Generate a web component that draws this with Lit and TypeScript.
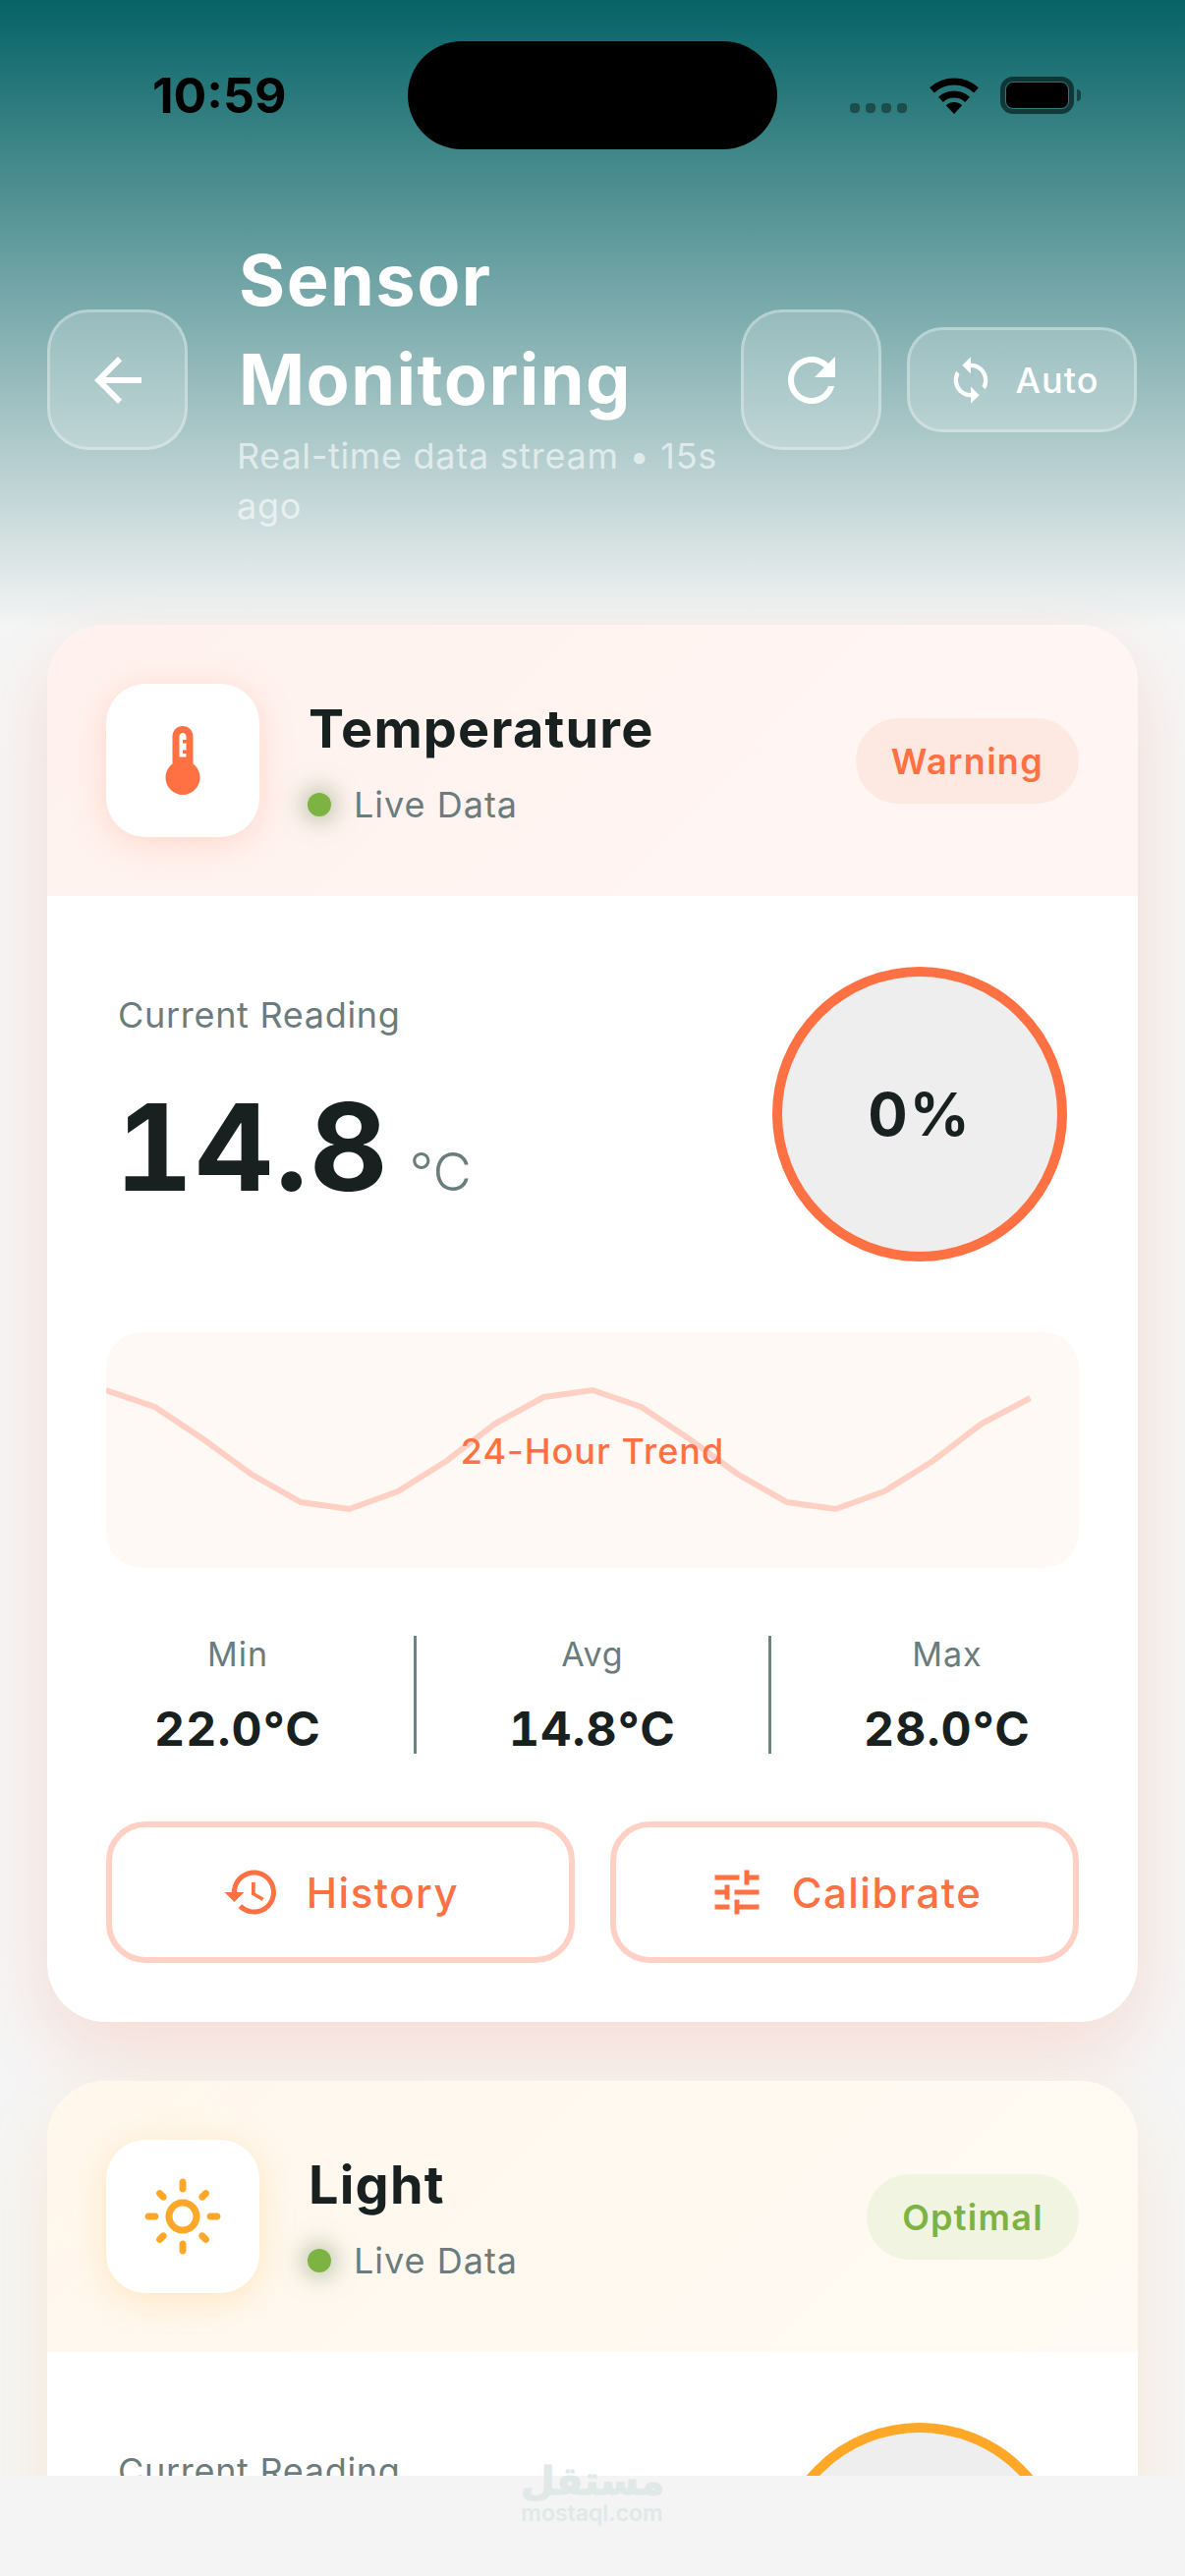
import { LitElement, html, css, svg } from 'lit';
import { customElement } from 'lit/decorators.js';

const ICONS: Record<string, string> = {
  back: 'M20 11H7.83l5.59-5.59L12 4l-8 8 8 8 1.41-1.41L7.83 13H20v-2z',
  refresh: 'M17.65 6.35C16.2 4.9 14.21 4 12 4c-4.42 0-7.99 3.58-7.99 8s3.57 8 7.99 8c3.73 0 6.84-2.55 7.73-6h-2.08c-.82 2.33-3.04 4-5.65 4-3.31 0-6-2.69-6-6s2.69-6 6-6c1.66 0 3.14.69 4.22 1.78L13 11h7V4l-2.35 2.35z',
  sync: 'M12 4V1L8 5l4 4V6c3.31 0 6 2.69 6 6 0 1.01-.25 1.97-.7 2.8l1.46 1.46C19.54 15.03 20 13.57 20 12c0-4.42-3.58-8-8-8zm0 14c-3.31 0-6-2.69-6-6 0-1.01.25-1.97.7-2.8L5.24 7.74C4.46 8.97 4 10.43 4 12c0 4.42 3.58 8 8 8v3l4-4-4-4v3z',
  history: 'M13 3c-4.97 0-9 4.03-9 9H1l3.89 3.89.07.14L9 12H6c0-3.87 3.13-7 7-7s7 3.13 7 7-3.13 7-7 7c-1.93 0-3.68-.79-4.94-2.06l-1.42 1.42C8.27 19.99 10.51 21 13 21c4.97 0 9-4.03 9-9s-4.03-9-9-9zm-1 5v5l4.28 2.54.72-1.21-3.5-2.08V8H12z',
  tune: 'M3 17v2h6v-2H3zM3 5v2h10V5H3zm10 16v-2h8v-2h-8v-2h-2v6h2zM7 9v2H3v2h4v2h2V9H7zm14 4v-2H11v2h10zm-6-4h2V7h4V5h-4V3h-2v6z',
  thermo: 'M15 13V5c0-1.66-1.34-3-3-3S9 3.34 9 5v8c-1.21.91-2 2.37-2 4 0 2.76 2.24 5 5 5s5-2.24 5-5c0-1.63-.79-3.09-2-4zm-4-2V5c0-.55.45-1 1-1s1 .45 1 1v1h-1v1h1v2h-1v1h1v1h-2z',
  sun: 'M12 9c1.65 0 3 1.35 3 3s-1.35 3-3 3-3-1.35-3-3 1.35-3 3-3m0-2c-2.76 0-5 2.24-5 5s2.24 5 5 5 5-2.24 5-5-2.24-5-5-5zM2 13h2c.55 0 1-.45 1-1s-.45-1-1-1H2c-.55 0-1 .45-1 1s.45 1 1 1zm18 0h2c.55 0 1-.45 1-1s-.45-1-1-1h-2c-.55 0-1 .45-1 1s.45 1 1 1zM11 2v2c0 .55.45 1 1 1s1-.45 1-1V2c0-.55-.45-1-1-1s-1 .45-1 1zm0 18v2c0 .55.45 1 1 1s1-.45 1-1v-2c0-.55-.45-1-1-1s-1 .45-1 1zM5.99 4.58c-.39-.39-1.03-.39-1.41 0-.39.39-.39 1.03 0 1.41l1.06 1.06c.39.39 1.03.39 1.41 0s.39-1.03 0-1.41L5.99 4.58zm12.37 12.37c-.39-.39-1.03-.39-1.41 0-.39.39-.39 1.03 0 1.41l1.06 1.06c.39.39 1.03.39 1.41 0 .39-.39.39-1.03 0-1.41l-1.06-1.06zm1.06-10.96c.39-.39.39-1.03 0-1.41-.39-.39-1.03-.39-1.41 0l-1.06 1.06c-.39.39-.39 1.03 0 1.41s1.03.39 1.41 0l1.06-1.06zM7.05 18.36c.39-.39.39-1.03 0-1.41-.39-.39-1.03-.39-1.41 0l-1.06 1.06c-.39.39-.39 1.03 0 1.41s1.03.39 1.41 0l1.06-1.06z',
};

const icon = (name: string, size: number) => html`<svg class="icon" width=${size} height=${size} viewBox="0 0 24 24" fill="currentColor"><path d=${ICONS[name]}></path></svg>`;

// y values of the trend line, sampled every 49.5px across the chart
const TREND = [59, 76, 109, 145, 173, 180, 162, 131, 93, 66, 59, 76, 109, 145, 173, 180, 162, 131, 93, 67];

const SENSORS = [
  { key: 'temp', name: 'Temperature', icon: 'thermo', badge: 'Warning', badgeCls: 'warn', value: '14.8', unit: '°C', min: '22.0°C', avg: '14.8°C', max: '28.0°C' },
  { key: 'light', name: 'Light', icon: 'sun', badge: 'Optimal', badgeCls: 'ok', value: '620', unit: 'lux', min: '400 lux', avg: '620 lux', max: '800 lux' },
];

@customElement('app-root')
export class AppRoot extends LitElement {
  static styles = css`
    :host {
      display: flex;
      flex-direction: column;
      position: relative;
      width: 100%;
      height: 100vh;
      overflow: hidden;
      font-family: Inter, 'Liberation Sans', sans-serif;
      background: #f4f4f4;
      color: #182020;
    }
    .icon { display: block; flex: none; }
    .screen {
      flex: 1;
      min-height: 0;
      overflow: hidden;
      background: linear-gradient(180deg, #056366 0, #f5f5f5 640px) no-repeat, #f5f5f5;
    }
    .status {
      height: 238px;
      box-sizing: border-box;
      padding-top: 42px;
      padding-left: 155px;
      display: grid;
      grid-template-columns: 260px 376px auto;
      align-items: start;
    }
    .time {
      font-size: 50px;
      font-weight: 700;
      line-height: 60px;
      margin-top: 25px;
      color: #000;
    }
    .island { height: 110px; border-radius: 55px; background: #000; }
    .sys { position: relative; display: flex; align-items: flex-end; margin-left: 74px; margin-top: 36px; height: 38px; }
    .dots { display: flex; gap: 6px; margin-bottom: 1px; }
    .dots i { width: 10px; height: 10px; border-radius: 4px; background: rgba(0, 0, 0, 0.38); }
    .wifi { margin-left: 23px; }
    .battery {
      margin-left: 22px;
      width: 75px;
      height: 38px;
      box-sizing: border-box;
      border: 5px solid rgba(0, 0, 0, 0.55);
      border-radius: 13px;
      padding: 1px;
    }
    .battery b { display: block; height: 100%; background: #000; border-radius: 7px; }
    .cap { width: 4px; height: 12px; margin: 0 0 13px 3px; border-radius: 0 4px 4px 0; background: rgba(0, 0, 0, 0.45); }

    .head {
      display: flex;
      align-items: center;
      padding: 0 49px 0 48px;
      height: 303px;
      margin-bottom: 95px;
      color: #fff;
    }
    .glass {
      box-sizing: border-box;
      display: flex;
      align-items: center;
      justify-content: center;
      flex: none;
      border: 3px solid rgba(255, 255, 255, 0.3);
      background: rgba(255, 255, 255, 0.2);
    }
    .square { width: 143px; height: 143px; border-radius: 42px; margin-top: -6px; }
    .auto { width: 234px; height: 107px; border-radius: 36px; gap: 20px; margin-left: 26px; margin-top: -6px; font-size: 36px; font-weight: 500; letter-spacing: 1px; }
    .heading { flex: 1; min-width: 0; margin: 0 18px 0 50px; }
    .heading h1 { margin: -4px 0 0 2px; font-size: 72px; line-height: 101px; font-weight: 700; letter-spacing: 1.5px; }
    .heading p { margin: 3px 0 0; font-size: 36px; line-height: 51px; letter-spacing: 0.7px; color: rgba(255, 255, 255, 0.6); }

    .cards { display: flex; flex-direction: column; gap: 60px; padding: 0 48px; }
    .card {
      background: #fff;
      border-radius: 60px;
      overflow: hidden;
    }
    .shadowed { border-radius: 60px; box-shadow: 0 30px 72px var(--shadow); }
    .temp { --accent: #ff7043; --soft: #ffd0c3; --shadow: rgba(255, 112, 67, 0.18); --tint1: #fff2ee; --tint2: #fff6f3; --panel: #fff9f6; }
    .light { --accent: #ffa726; --soft: #ffe4bc; --shadow: rgba(255, 167, 38, 0.15); --tint1: #fff7ec; --tint2: #fffaf3; --panel: #fffbf5; }
    .card-head {
      height: 276px;
      box-sizing: border-box;
      padding: 0 60px;
      display: flex;
      align-items: center;
      background: linear-gradient(135deg, var(--tint1), var(--tint2));
    }
    .tile {
      width: 156px;
      height: 156px;
      border-radius: 40px;
      background: #fff;
      color: var(--accent);
      display: flex;
      align-items: center;
      justify-content: center;
      box-shadow: 0 6px 36px color-mix(in srgb, var(--accent) 22%, transparent);
    }
    .who { flex: 1; margin-left: 50px; padding-top: 2px; }
    .who h2 { margin: 0; font-size: 54px; line-height: 66px; font-weight: 700; letter-spacing: 1.2px; }
    .live { display: flex; align-items: center; gap: 23px; margin-top: 22px; margin-left: -1px; font-size: 36px; line-height: 44px; letter-spacing: 1px; color: #6b7c7c; }
    .live i { width: 24px; height: 24px; border-radius: 50%; background: #7cb342; box-shadow: 0 0 24px 4px rgba(110, 140, 90, 0.55); }
    .badge { padding: 2px 36px 0; box-sizing: border-box; height: 87px; display: flex; align-items: center; border-radius: 44px; font-size: 36px; font-weight: 600; letter-spacing: 1.3px; }
    .warn { background: #fee8e2; color: #ff7043; }
    .ok { background: #f1f4e1; color: #7cb342; }

    .card-body { padding: 60px; }
    .reading { display: flex; align-items: center; justify-content: space-between; padding: 12px; }
    .reading-text { padding-bottom: 16px; }
    .reading small { display: block; font-size: 36px; line-height: 44px; letter-spacing: 0.7px; color: #6b7c7c; }
    .number { display: flex; align-items: baseline; gap: 20px; margin: 40px 0 0 -3px; }
    .number strong { font-size: 123px; line-height: 146px; font-weight: 700; letter-spacing: 2px; font-variant-numeric: tabular-nums; }
    .number span { font-size: 54px; font-weight: 300; color: #6b7c7c; }
    .ring {
      width: 300px;
      height: 300px;
      box-sizing: border-box;
      border-radius: 50%;
      border: 10px solid var(--accent);
      background: #eee;
      display: flex;
      align-items: center;
      justify-content: center;
      font-size: 60px;
      font-weight: 700;
      letter-spacing: 2px;
    }
    .chart {
      margin-top: 60px;
      height: 240px;
      border-radius: 36px;
      overflow: hidden;
      background: var(--panel);
      display: grid;
      place-items: center;
      color: var(--accent);
      font-size: 36px;
      font-weight: 500;
      letter-spacing: 1px;
    }
    .chart > * { grid-area: 1 / 1; }
    .chart svg { width: 990px; height: 240px; }
    .chart polyline { fill: none; stroke: var(--soft); stroke-width: 6; }
    .chart div { padding-top: 2px; }
    .stats { display: flex; justify-content: space-around; align-items: center; margin-top: 69px; height: 120px; }
    .stat { width: 178px; text-align: center; }
    .stat small { display: block; font-size: 34px; line-height: 44px; letter-spacing: 1px; color: #6b7c7c; }
    .stat b { display: block; font-size: 48px; line-height: 58px; margin-top: 25px; font-weight: 700; letter-spacing: 1.2px; font-variant-numeric: tabular-nums; white-space: nowrap; }
    .rule { width: 3px; height: 120px; background: #6b8383; }
    .actions { display: grid; grid-template-columns: 1fr 1fr; gap: 36px; margin-top: 69px; }
    .action {
      height: 144px;
      box-sizing: border-box;
      border: 6px solid var(--soft);
      border-radius: 40px;
      display: flex;
      align-items: center;
      justify-content: center;
      gap: 26px;
      color: var(--accent);
      font-size: 42px;
      font-weight: 500;
      letter-spacing: 1.5px;
    }
    .foot { flex: none; height: 102px; background: #f4f4f4; }
    .mark {
      position: absolute;
      left: 530px;
      top: 2504px;
      width: 145px;
      text-align: center;
      color: #e1e8e8;
    }
    .mark span { display: block; font-family: 'DejaVu Sans', sans-serif; font-weight: 700; font-size: 40px; line-height: 43px; -webkit-text-stroke: 1px #e1e8e8; }
    .mark em { display: block; font-style: normal; font-weight: 600; font-size: 23px; line-height: 22px; }
  `;

  private card(s: (typeof SENSORS)[number]) {
    const points = TREND.map((y, i) => `${i * 49.5},${y}`).join(' ');
    return html`
      <div class="shadowed ${s.key}">
        <section class="card">
          <div class="card-head">
            <div class="tile">${icon(s.icon, 84)}</div>
            <div class="who">
              <h2>${s.name}</h2>
              <div class="live"><i></i>Live Data</div>
            </div>
            <div class="badge ${s.badgeCls}">${s.badge}</div>
          </div>
          <div class="card-body">
            <div class="reading">
              <div class="reading-text">
                <small>Current Reading</small>
                <div class="number"><strong>${s.value}</strong><span>${s.unit}</span></div>
              </div>
              <div class="ring">0%</div>
            </div>
            <div class="chart">
              <svg viewBox="0 0 990 240">${svg`<polyline points=${points}></polyline>`}</svg>
              <div>24-Hour Trend</div>
            </div>
            <div class="stats">
              <div class="stat"><small>Min</small><b>${s.min}</b></div>
              <div class="rule"></div>
              <div class="stat"><small>Avg</small><b>${s.avg}</b></div>
              <div class="rule"></div>
              <div class="stat"><small>Max</small><b>${s.max}</b></div>
            </div>
            <div class="actions">
              <div class="action">${icon('history', 60)}History</div>
              <div class="action">${icon('tune', 60)}Calibrate</div>
            </div>
          </div>
        </section>
      </div>
    `;
  }

  render() {
    return html`
      <div class="screen">
        <div class="status">
          <div class="time">10:59</div>
          <div class="island"></div>
          <div class="sys">
            <div class="dots"><i></i><i></i><i></i><i></i></div>
            <svg class="wifi" width="50" height="37" viewBox="0 0 50 37" fill="none" stroke="#000">
              <path d="M2.5 12.9A33 33 0 0 1 47.5 12.9" stroke-width="7"></path>
              <path d="M11.4 22.4A20 20 0 0 1 38.6 22.4" stroke-width="7"></path>
              <path d="M16.8 28.2A12 12 0 0 1 33.2 28.2L25 37Z" fill="#000" stroke="none"></path>
            </svg>
            <div class="battery"><b></b></div>
            <div class="cap"></div>
          </div>
        </div>
        <header class="head">
          <div class="glass square">${icon('back', 72)}</div>
          <div class="heading">
            <h1>Sensor Monitoring</h1>
            <p>Real-time data stream • 15s ago</p>
          </div>
          <div class="glass square">${icon('refresh', 72)}</div>
          <div class="glass auto">${icon('sync', 52)}Auto</div>
        </header>
        <div class="cards">${SENSORS.map((s) => this.card(s))}</div>
      </div>
      <div class="foot"></div>
      <div class="mark"><span>مستقل</span><em>mostaql.com</em></div>
    `;
  }
}
